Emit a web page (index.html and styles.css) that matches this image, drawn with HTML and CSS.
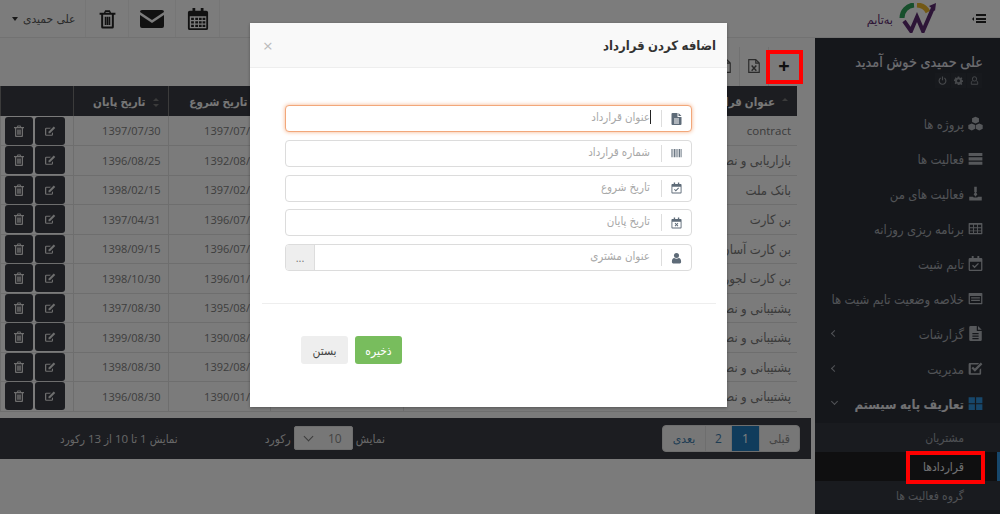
FILE: index.html
```html
<!DOCTYPE html>
<html lang="fa" dir="rtl">
<head>
  <meta charset="UTF-8">
  <title>به‌تایم - قراردادها</title>
  <link rel="stylesheet" href="styles.css">
</head>
<body>
  <svg class="defs" width="0" height="0">
    <symbol id="i-trash" viewBox="0 0 24 24"><path fill-rule="evenodd" d="M9 1h6l1.500 3H22v2.500h-2V22a2 2 0 0 1-2 2H6a2 2 0 0 1-2-2V6.500H2V4h5.500zM10 3l-.7 1h5.400L14 3zM6.500 6.500V21.500h11V6.500zM8.500 9H10.500V19.500H8.500zM11 9H13V19.500H11zM13.500 9H15.500V19.500H13.500z"/></symbol>
    <symbol id="i-edit" viewBox="0 0 24 24"><path d="M18 14.500v4.500a2.500 2.500 0 0 1-2.500 2.500H4.500A2.500 2.500 0 0 1 2 19V8a2.500 2.500 0 0 1 2.500-2.500H14l-2.200 2.200H4.500V19.300h11.200v-2.600z"/><path d="M19.500 3l3 3L12 16.500H9v-3z"/></symbol>
    <symbol id="i-calendar" viewBox="0 0 24 24"><path fill-rule="evenodd" d="M6 0h3v3h6V0h3v3h3a2 2 0 0 1 2 2v17a2 2 0 0 1-2 2H3a2 2 0 0 1-2-2V5a2 2 0 0 1 2-2h3zM3 9v13h18V9zM4.500 10.500h3v2.500h-3zM9 10.500h3v2.500H9zM13 10.500h3v2.500h-3zM17 10.500h3v2.500h-3zM4.500 14.500h3v2.500h-3zM9 14.500h3v2.500H9zM13 14.500h3v2.500h-3zM17 14.500h3v2.500h-3zM4.500 18.300h3v2.500h-3zM9 18.300h3v2.500H9zM13 18.300h3v2.500h-3zM17 18.300h3v2.500h-3z"/></symbol>
    <symbol id="i-mail" viewBox="0 0 24 18"><path d="M2 0h20a2 2 0 0 1 2 2L12 10 0 2a2 2 0 0 1 2-2z"/><path d="M0 5l12 8 12-8v11a2 2 0 0 1-2 2H2a2 2 0 0 1-2-2z"/></symbol>
    <symbol id="i-file" viewBox="0 0 20 24"><path fill-rule="evenodd" d="M2 0h10v7a1 1 0 0 0 1 1h7v14a2 2 0 0 1-2 2H2a2 2 0 0 1-2-2V2a2 2 0 0 1 2-2zM14 0l6 6h-6zM5 11v2h10v-2zM5 15v2h10v-2zM5 19v2h10v-2z"/></symbol>
    <symbol id="i-excel" viewBox="0 0 20 24"><path fill="none" stroke="currentColor" stroke-width="2" d="M1 1h12l6 6v16H1zM13 1v6h6"/><path fill="none" stroke="currentColor" stroke-width="2.500" d="M6 11l8 9M14 11l-8 9"/></symbol>
    <symbol id="i-doc-o" viewBox="0 0 20 24"><path fill="none" stroke="currentColor" stroke-width="2" d="M1 1h12l6 6v16H1zM13 1v6h6"/></symbol>
    <symbol id="i-barcode" viewBox="0 0 24 24"><path d="M1 3h2v18H1zM4 3h1v18H4zM6.500 3h2v18h-2zM10 3h1v18h-1zM12 3h2v18h-2zM15 3h1v18h-1zM17.500 3h2v18h-2zM21 3h2v18h-2z"/></symbol>
    <symbol id="i-cal-check" viewBox="0 0 24 24"><path fill-rule="evenodd" d="M6 0h3v3h6V0h3v3h3a2 2 0 0 1 2 2v17a2 2 0 0 1-2 2H3a2 2 0 0 1-2-2V5a2 2 0 0 1 2-2h3zM3 9v13h18V9z"/><path d="M10.500 19.500l-4-4 1.500-1.500 2.500 2.500 5.500-5.500 1.500 1.500z"/></symbol>
    <symbol id="i-cal-x" viewBox="0 0 24 24"><path fill-rule="evenodd" d="M6 0h3v3h6V0h3v3h3a2 2 0 0 1 2 2v17a2 2 0 0 1-2 2H3a2 2 0 0 1-2-2V5a2 2 0 0 1 2-2h3zM3 9v13h18V9z"/><path d="M9.500 11.500l2.500 2.500 2.500-2.500 1.500 1.500-2.500 2.500 2.500 2.500-1.500 1.500-2.500-2.500-2.500 2.500-1.500-1.500 2.500-2.500-2.500-2.500z"/></symbol>
    <symbol id="i-user" viewBox="0 0 24 24"><circle cx="12" cy="6.500" r="5.500"/><path d="M7 12c3 2 7 2 10 0 3 .5 5 3 5 7v2.500A2.500 2.500 0 0 1 19.500 24h-15A2.500 2.500 0 0 1 2 21.500V19c0-4 2-6.500 5-7z"/></symbol>
    <symbol id="i-cubes" viewBox="0 0 24 24"><path d="M12 1l5.500 2.500v6L12 12 6.500 9.500v-6z"/><path d="M6 12l5.500 2.500v6L6 23 .5 20.500v-6z"/><path d="M18 12l5.500 2.500v6L18 23l-5.500-2.500v-6z"/></symbol>
    <symbol id="i-tasks" viewBox="0 0 24 24"><path d="M1 3h22v5H1zM1 10h22v5H1zM1 17h22v5H1z"/></symbol>
    <symbol id="i-download" viewBox="0 0 24 24"><path d="M10 1h4v9h-1.500l2.500 3-3 4-3-4 2.500-3H10z"/><path d="M2 17h6c1 2 7 2 8 0h6v6H2z"/></symbol>
    <symbol id="i-grid" viewBox="0 0 24 24"><path fill-rule="evenodd" d="M2 3h20a1 1 0 0 1 1 1v16a1 1 0 0 1-1 1H2a1 1 0 0 1-1-1V4a1 1 0 0 1 1-1zM3 6v4h5V6zM9.500 6v4h5V6zM16 6v4h5V6zM3 11.500v3.500h5v-3.500zM9.500 11.500v3.500h5v-3.500zM16 11.500v3.500h5v-3.500zM3 16.500V19h5v-2.500zM9.500 16.500V19h5v-2.500zM16 16.500V19h5v-2.500z"/></symbol>
    <symbol id="i-list-alt" viewBox="0 0 24 24"><path fill-rule="evenodd" d="M2 3h20a1 1 0 0 1 1 1v16a1 1 0 0 1-1 1H2a1 1 0 0 1-1-1V4a1 1 0 0 1 1-1zM3 8v11h18V8zM5 10h14v2H5zM5 14h14v2H5z"/></symbol>
    <symbol id="i-check" viewBox="0 0 24 24"><path d="M3 3h15l-2.500 2.500H4.500v14h14V14l2.500-2.500V20a2 2 0 0 1-2 2H3a2 2 0 0 1-2-2V5a2 2 0 0 1 2-2z"/><path d="M11 17L5.500 11.500 8 9l3 3 9.500-9.500L23 5z"/></symbol>
    <symbol id="i-win" viewBox="0 0 24 24"><path d="M1 2h10v9.500H1zM13 2h10v9.500H13zM1 13h10v9.500H1zM13 13h10v9.500H13z"/></symbol>
    <symbol id="i-gear" viewBox="0 0 24 24"><path fill-rule="evenodd" d="M10 1h4l.6 3.200 2.200.9L19.500 3.300l2.800 2.800-1.800 2.700.9 2.200 3 .6v4l-3 .6-.9 2.200 1.800 2.700-2.800 2.800-2.700-1.800-2.200.9L14 24h-4l-.6-3.100-2.200-.9-2.700 1.800-2.800-2.800 1.800-2.700-.9-2.200-3-.6v-4l3-.6.900-2.200L1.700 6.100l2.800-2.800 2.700 1.800 2.200-.9zM12 8.500a4 4 0 1 0 0 8 4 4 0 0 0 0-8z"/></symbol>
    <symbol id="i-power" viewBox="0 0 24 24"><path fill="none" stroke="currentColor" stroke-width="3" d="M7 5.500a9 9 0 1 0 10 0M12 1v10"/></symbol>
    <symbol id="i-user-o" viewBox="0 0 24 24"><path fill="none" stroke="currentColor" stroke-width="2.500" d="M12 2a5.500 5.500 0 0 1 5.500 6c0 3-2.500 5.500-5.500 5.500S6.500 11 6.500 8A5.500 5.500 0 0 1 12 2zM7.500 12C5 13 3.500 15.500 3.500 19v3h17v-3c0-3.500-1.500-6-4-7"/></symbol>
  </svg>

  <header class="topbar">
    <div class="brand-side">
      <button class="menu-toggle"><span class="bars"></span><span class="mini-caret"></span></button>
      <div class="logo">
        <svg width="38" height="30" viewBox="0 0 38 30">
          <path d="M4 15A13 13 0 0 1 16 2" fill="none" stroke="#2f9e58" stroke-width="5"/>
          <path d="M19 2A13 13 0 0 1 30 9" fill="none" stroke="#e7b32a" stroke-width="5"/>
          <path d="M6 18l7 10 6-14 6 14L35 5" fill="none" stroke="#5b2a6f" stroke-width="4"/>
          <path d="M31 3l7-3-1 8z" fill="#5b2a6f"/>
        </svg>
        <span class="logo-text">به‌تایم</span>
      </div>
    </div>
    <div class="top-tools">
      <a class="tool tool-cal"><svg class="ico"><use href="#i-calendar"/></svg></a>
      <a class="tool tool-mail"><svg class="ico"><use href="#i-mail"/></svg></a>
      <a class="tool tool-trash"><svg class="ico"><use href="#i-trash"/></svg></a>
      <a class="user-menu">علی حمیدی <span class="caret-down"></span></a>
    </div>
  </header>

  <div class="main">
    <aside class="sidebar">
      <div class="welcome">
        <h3>علی حمیدی خوش آمدید</h3>
        <div class="welcome-tools">
          <span><svg><use href="#i-user-o"/></svg></span>
          <span><svg><use href="#i-gear"/></svg></span>
          <span><svg><use href="#i-power"/></svg></span>
        </div>
      </div>
      <ul class="menu">
        <li><svg><use href="#i-cubes"/></svg>پروژه ها</li>
        <li><svg><use href="#i-tasks"/></svg>فعالیت ها</li>
        <li><svg><use href="#i-download"/></svg>فعالیت های من</li>
        <li><svg><use href="#i-grid"/></svg>برنامه ریزی روزانه</li>
        <li><svg><use href="#i-cal-check"/></svg>تایم شیت</li>
        <li><svg><use href="#i-list-alt"/></svg>خلاصه وضعیت تایم شیت ها</li>
        <li><svg><use href="#i-file"/></svg>گزارشات<span class="chev chev-left"></span></li>
        <li><svg><use href="#i-check"/></svg>مدیریت<span class="chev chev-left"></span></li>
        <li class="open"><svg class="win"><use href="#i-win"/></svg>تعاریف پایه سیستم<span class="chev chev-down"></span></li>
      </ul>
      <ul class="submenu">
        <li>مشتریان</li>
        <li class="active">قراردادها</li>
        <li>گروه فعالیت ها</li>
      </ul>
    </aside>

    <section class="content">
      <div class="toolbar">
        <button class="tb-btn tb-add">+</button>
        <button class="tb-btn"><svg><use href="#i-excel"/></svg></button>
        <button class="tb-btn"><svg><use href="#i-doc-o"/></svg></button>
      </div>

      <table class="grid">
        <thead>
          <tr>
            <th class="col-title"><span class="sort-up"></span>عنوان قرارداد</th>
            <th class="col-extra"></th>
            <th class="col-date"><span class="sort-both"></span>تاریخ شروع</th>
            <th class="col-end"><span class="sort-both"></span>تاریخ پایان</th>
            <th class="col-act"></th>
          </tr>
        </thead>
        <tbody>
          <tr><td class="latin">contract</td><td></td><td>1397/07/01</td><td>1397/07/30</td><td class="acts"><a><svg><use href="#i-edit"/></svg></a><a><svg><use href="#i-trash"/></svg></a></td></tr>
          <tr><td>بازاریابی و نصب</td><td></td><td>1392/08/25</td><td>1396/08/25</td><td class="acts"><a><svg><use href="#i-edit"/></svg></a><a><svg><use href="#i-trash"/></svg></a></td></tr>
          <tr><td>بانک ملت</td><td></td><td>1397/02/15</td><td>1398/02/15</td><td class="acts"><a><svg><use href="#i-edit"/></svg></a><a><svg><use href="#i-trash"/></svg></a></td></tr>
          <tr><td>بن کارت</td><td></td><td>1396/07/01</td><td>1397/04/31</td><td class="acts"><a><svg><use href="#i-edit"/></svg></a><a><svg><use href="#i-trash"/></svg></a></td></tr>
          <tr><td>بن کارت آسان</td><td></td><td>1396/07/15</td><td>1398/09/15</td><td class="acts"><a><svg><use href="#i-edit"/></svg></a><a><svg><use href="#i-trash"/></svg></a></td></tr>
          <tr><td>بن کارت لجور</td><td></td><td>1396/01/30</td><td>1398/10/30</td><td class="acts"><a><svg><use href="#i-edit"/></svg></a><a><svg><use href="#i-trash"/></svg></a></td></tr>
          <tr><td>پشتیبانی و نصب</td><td></td><td>1395/08/30</td><td>1397/08/30</td><td class="acts"><a><svg><use href="#i-edit"/></svg></a><a><svg><use href="#i-trash"/></svg></a></td></tr>
          <tr><td>پشتیبانی و نصب</td><td></td><td>1390/08/30</td><td>1399/08/30</td><td class="acts"><a><svg><use href="#i-edit"/></svg></a><a><svg><use href="#i-trash"/></svg></a></td></tr>
          <tr><td>پشتیبانی و نصب</td><td></td><td>1392/08/30</td><td>1398/08/30</td><td class="acts"><a><svg><use href="#i-edit"/></svg></a><a><svg><use href="#i-trash"/></svg></a></td></tr>
          <tr><td>پشتیبانی و نصب</td><td></td><td>1390/01/30</td><td>1396/08/30</td><td class="acts"><a><svg><use href="#i-edit"/></svg></a><a><svg><use href="#i-trash"/></svg></a></td></tr>
        </tbody>
      </table>

      <div class="grid-footer">
        <div class="pager">
          <a>قبلی</a>
          <a class="current">1</a>
          <a>2</a>
          <a>بعدی</a>
        </div>
        <div class="page-size">
          <span>نمایش</span>
          <span class="select-box"><span>10</span><span class="select-arrow"></span></span>
          <span>رکورد</span>
        </div>
        <div class="page-info">نمایش 1 تا 10 از 13 رکورد</div>
      </div>
    </section>
  </div>

  <div class="backdrop"></div>

  <div class="modal">
    <div class="modal-head">
      <h4>اضافه کردن قرارداد</h4>
      <span class="close">×</span>
    </div>
    <form class="modal-form">
      <label class="field focused">
        <span class="field-icon"><svg><use href="#i-file"/></svg></span>
        <input type="text" placeholder="عنوان قرارداد">
        <span class="text-caret"></span>
      </label>
      <label class="field">
        <span class="field-icon"><svg><use href="#i-barcode"/></svg></span>
        <input type="text" placeholder="شماره قرارداد">
      </label>
      <label class="field">
        <span class="field-icon"><svg><use href="#i-cal-check"/></svg></span>
        <input type="text" placeholder="تاریخ شروع">
      </label>
      <label class="field">
        <span class="field-icon"><svg><use href="#i-cal-x"/></svg></span>
        <input type="text" placeholder="تاریخ پایان">
      </label>
      <label class="field">
        <span class="field-icon"><svg><use href="#i-user"/></svg></span>
        <input type="text" placeholder="عنوان مشتری">
        <span class="field-more">...</span>
      </label>
    </form>
    <hr class="modal-line">
    <div class="modal-actions">
      <button class="btn btn-save">ذخیره</button>
      <button class="btn btn-close">بستن</button>
    </div>
  </div>

  <div class="mark mark-add"></div>
  <div class="mark mark-contracts"></div>
</body>
</html>
```

FILE: styles.css
```css
* { box-sizing: border-box; }
html, body { height: 514px; }
body { margin: 0; overflow: hidden; background: #f6f6f6; font-family: "Open Sans", "DejaVu Sans Condensed", "DejaVu Sans", sans-serif; font-size: 12px; color: #777; position: relative; }
.defs { position: absolute; }
svg { fill: currentColor; }
ul { list-style: none; margin: 0; padding: 0; }
button, input { font-family: inherit; }

/* top bar */
.topbar { height: 38px; border-bottom: 1px solid #e4e4e4; display: flex; justify-content: space-between; background: #f8f8f8; }
.brand-side { display: flex; align-items: center; padding-right: 14px; }
.menu-toggle { width: 14px; padding: 0; margin-left: 36px; border: 0; background: none; display: flex; align-items: center; gap: 2px; }
.bars { width: 11px; height: 9px; border-top: 2px solid #222; border-bottom: 2px solid #222; position: relative; }
.bars::after { content: ""; position: absolute; left: 0; right: 0; top: 1.5px; height: 2px; background: #222; }
.mini-caret { border: 2px solid transparent; border-left: 0; border-right: 2px solid #222; }
.logo { display: flex; align-items: center; gap: 5px; margin-top: -2px; }
.logo-text { font-size: 12.500px; color: #5b2a6f; margin-top: 4px; }
.top-tools { display: flex; align-items: stretch; }
.tool { width: 45px; display: flex; align-items: center; justify-content: center; border-left: 1px solid #ececec; color: #222; }
.tool .ico { width: 22px; height: 24px; }
.tool-cal { border-right: 1px solid #ececec; }
.tool-mail { width: 47px; }
.tool-mail .ico { width: 24px; height: 18px; }
.tool-trash { width: 43px; }
.tool-trash .ico { width: 19px; height: 22px; }
.user-menu { width: 85px; display: flex; align-items: center; justify-content: flex-end; gap: 5px; padding-left: 12px; font-size: 12px; color: #555; }
.caret-down { border: 3px solid transparent; border-top: 4px solid #333; border-bottom: 0; }

/* layout */
.main { display: flex; height: 476px; }
.sidebar { width: 185px; flex: none; background: #2a2e36; color: #a2a6ad; }
.content { flex: 1; padding: 9px 4px 0 0; }

/* sidebar */
.welcome { height: 68px; padding: 14px 17px 0 0; }
.welcome h3 { margin: 0; font-size: 14.3px; line-height: 20px; font-weight: 400; color: #dcdde0; -webkit-text-stroke: .2px #dcdde0; }
.welcome-tools { display: flex; gap: 1px; margin-top: 1px; padding-right: 1px; }
.welcome-tools span { width: 15px; height: 15px; background: #2f333b; display: flex; align-items: center; justify-content: center; }
.welcome-tools svg { width: 9px; height: 9px; color: #8d9197; }
.menu li { height: 35px; display: flex; align-items: center; padding: 0 17px 0 15px; font-size: 13px; position: relative; gap: 4px; white-space: nowrap; }
.menu li svg { width: 15px; height: 15px; flex: none; color: #adb1b7; }
.menu li.open { height: 37px; padding-bottom: 2px; font-weight: 700; color: #e0e1e4; }
.menu li svg.win { color: #2f8fd6; }
.chev { width: 5px; height: 5px; border-left: 1px solid #a2a6ad; position: absolute; left: 17px; }
.chev-left { border-bottom: 1px solid #a2a6ad; transform: rotate(45deg); }
.chev-down { border-bottom: 1px solid #a2a6ad; transform: rotate(-45deg); top: 13px; }
.submenu { background: #33373f; }
.submenu li { height: 29px; display: flex; align-items: center; padding-right: 36px; font-size: 12px; color: #9da1a8; }
.submenu li.active { background: #1e1f21; color: #e2e3e6; border-right: 3px solid #2f8fd6; padding-right: 33px; }

/* toolbar */
.toolbar { height: 39px; display: flex; padding-right: 14px; align-items: stretch; }
.tb-btn { width: 29px; border: 0; border-left: 1px solid #e2e2e2; background: none; color: #333; display: flex; align-items: center; justify-content: center; padding: 0 0 1px; }
.tb-add { font-size: 20px; font-weight: 700; line-height: 1; color: #222; padding: 0 0 2px 2px; }
.tb-btn svg { width: 12px; height: 14px; color: #555; }

/* table */
.grid { width: 797px; margin: 0 14px 0 0; border-collapse: collapse; table-layout: fixed; }
.grid th { height: 30px; background: #383a42; color: #eee; font-size: 11.5px; font-weight: 700; padding: 0 9px; text-align: right; border-left: 1px solid #777; white-space: nowrap; }
.grid td { height: 29.5px; padding: 0 6px; text-align: right; font-size: 11px; border: 1px solid #ddd; border-width: 0 0 1px 1px; color: #7c7c7c; white-space: nowrap; overflow: hidden; }
.grid td:first-child { font-size: 13px; color: #777; }
.grid td.latin { font-size: 11.5px; }
.col-title { width: 394px; }
.col-extra { width: 133px; }
.col-date { width: 102px; }
.col-end { width: 95px; }
.col-act { width: 73px; }
.grid td:nth-child(3), .grid td:nth-child(4) { padding-right: 7px; }
.grid td.acts { padding: 0 8px 0 5px; font-size: 0; }
.acts a { display: inline-flex; width: 30px; height: 28px; align-items: center; justify-content: center; background: #383a42; border-radius: 3px; color: #ddd; vertical-align: middle; }
.acts a + a { width: 28px; margin-right: 2px; }
.acts svg { width: 12px; height: 12px; }
.sort-both, .sort-up { display: inline-block; width: 6px; height: 9px; margin-left: 7px; position: relative; vertical-align: middle; }
.sort-both::before, .sort-up::before { content: ""; position: absolute; top: 0; left: 0; border: 3px solid transparent; border-bottom: 3.500px solid #777; border-top: 0; }
.sort-both::after { content: ""; position: absolute; bottom: 0; left: 0; border: 3px solid transparent; border-top: 3.500px solid #777; border-bottom: 0; }

/* footer of the table */
.grid-footer { height: 41px; margin-top: 6px; background: #383a42; display: flex; align-items: center; padding-right: 11px; color: #cfcfcf; font-size: 12px; }
.pager { display: flex; height: 27px; background: #eee; border-radius: 4px; border: 1px solid #ddd; overflow: hidden; }
.pager a { display: flex; align-items: center; justify-content: center; width: 26px; color: #3d7aa8; border-left: 1px solid #ddd; }
.pager a:first-child { width: 40px; color: #888; }
.pager a:last-child { width: 42px; border-left: 0; }
.pager a.current { width: 28px; background: #2179b8; color: #fff; }
.page-size { display: flex; align-items: center; gap: 3px; margin-right: 277px; }
.select-box { width: 59px; height: 24px; background: #eee; border: 1px solid #ddd; border-radius: 2px; display: flex; align-items: center; justify-content: space-between; padding: 0 10px; color: #888; }
.select-arrow { width: 7px; height: 7px; border: solid #777; border-width: 0 0 1px 1px; transform: rotate(-45deg); margin-top: -4px; }
.page-info { margin-right: 87px; font-size: 11.5px; }

/* dim layer and dialog */
.backdrop { position: absolute; inset: 0; background: rgba(0,0,0,.5); z-index: 10; }
.modal { position: absolute; top: 23px; left: 250px; width: 477px; height: 384px; background: #fff; z-index: 20; box-shadow: 0 1px 3px rgba(0,0,0,.3); }
.modal-head { height: 45px; background: #f9f9f9; border-bottom: 1px solid #eee; display: flex; align-items: center; justify-content: space-between; padding: 0 11px 0 13px; }
.modal-head h4 { margin: 0; font-size: 13px; font-weight: 700; color: #333; }
.close { color: #bbb; font-size: 17px; }
.modal-form { padding: 37px 35px 0; display: flex; flex-direction: column; gap: 7.75px; }
.field { height: 27px; border: 1px solid #dcdcdc; border-radius: 4px; display: flex; align-items: center; position: relative; overflow: hidden; background: #fff; }
.focused { border-color: #f2a77a; box-shadow: 0 0 4px #f5b48c; overflow: visible; }
.field-icon { width: 30px; flex: none; height: 17px; border-left: 1px solid #ddd; display: flex; align-items: center; justify-content: center; color: #5e6b78; }
.field-icon svg { width: 11px; height: 12px; }
.field input { flex: 1; min-width: 0; height: 100%; border: 0; outline: 0; padding: 0 11px 4px; background: none; font-size: 11.5px; color: #555; }
.field input::placeholder { color: #a8a8a8; }
.text-caret { position: absolute; right: 40px; top: 4px; width: 1px; height: 14px; background: #222; }
.field-more { width: 29px; height: 100%; flex: none; background: #eee; display: flex; align-items: center; justify-content: center; color: #777; font-size: 11px; border-right: 1px solid #ddd; }
.modal-line { margin: 32px 11px 0 12px; border: 0; border-top: 1px solid #eee; }
.modal-actions { display: flex; justify-content: flex-end; gap: 7px; padding: 32px 0 0; margin-left: 51px; }
.btn { width: 47px; height: 28px; border: 0; border-radius: 3px; font-size: 12px; padding: 0; }
.btn-save { background: #78bd5d; color: #fff; }
.btn-close { background: #eee; color: #444; }

/* red marks drawn over the screenshot */
.mark { position: absolute; border: 4px solid #f00; z-index: 30; }
.mark-add { left: 766px; top: 50px; width: 37px; height: 34px; }
.mark-contracts { left: 906px; top: 451px; width: 79px; height: 33px; }
```
